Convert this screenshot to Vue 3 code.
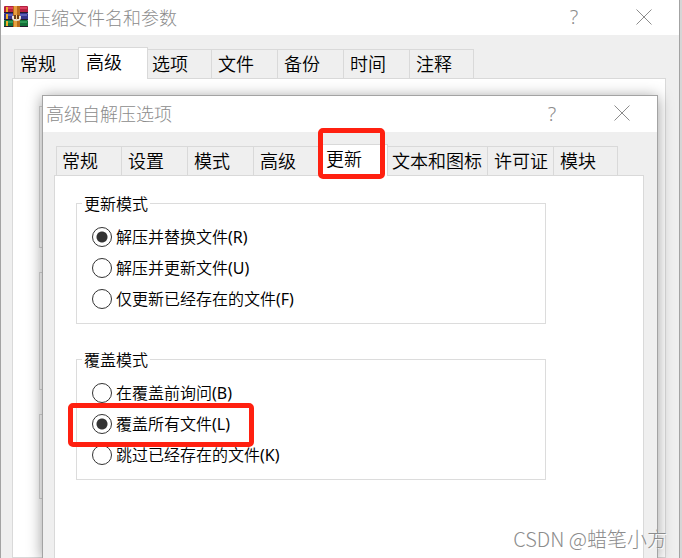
<template>
  <div class="desktop">
    <div class="window outer">
      <header class="titlebar">
        <svg class="logo" viewBox="0 0 24 22" width="24" height="22">
          <rect x="0" y="0" width="24" height="7" rx="1" fill="#b3213f" />
          <rect x="2" y="1" width="21" height="2" fill="#dc4060" />
          <rect x="0" y="7" width="24" height="7" rx="1" fill="#35358c" />
          <rect x="2" y="8" width="21" height="2" fill="#5c60b8" />
          <rect x="0" y="14" width="24" height="7" rx="1" fill="#137039" />
          <rect x="2" y="15" width="21" height="2" fill="#2c9854" />
          <path d="M0 6.5h24M0 13.5h24M0 20.5h24" stroke="#251a2c" />
          <path d="M3 1v5M3 8v5M3 15v5" stroke="#f2ae25" stroke-width="2" />
          <rect x="9" y="0" width="7" height="21" fill="#b86a1b" />
          <path d="M11.5 0v21" stroke="#e8a040" stroke-width="3" />
          <path d="M9 10v2q0 2 3.5 2t3.5-2v-2" fill="none" stroke="#eee6d8" stroke-width="2" />
          <rect x="10" y="9" width="5" height="4" fill="#704018" />
          <path d="M12.5 9v5" stroke="#f5d28a" />
        </svg>
        <h1>压缩文件名和参数</h1>
        <button class="caption" type="button" aria-label="帮助">?</button>
        <button class="caption" type="button" aria-label="关闭">
          <svg viewBox="0 0 16 16" width="16" height="16"><path d="M.5 .5l15 15M15.5 .5l-15 15" /></svg>
        </button>
      </header>
      <nav class="tabs">
        <button
          v-for="tab in outerTabs"
          :key="tab"
          type="button"
          :class="{ active: tab === outerTab }"
          @click="outerTab = tab"
        >
          {{ tab }}
        </button>
      </nav>
      <div class="panel back">
        <div class="frame large"></div>
        <div class="frame medium"></div>
        <div class="frame small"></div>
      </div>
    </div>

    <div class="window inner">
      <header class="titlebar">
        <h2>高级自解压选项</h2>
        <button class="caption" type="button" aria-label="帮助">?</button>
        <button class="caption" type="button" aria-label="关闭">
          <svg viewBox="0 0 16 16" width="16" height="16"><path d="M.5 .5l15 15M15.5 .5l-15 15" /></svg>
        </button>
      </header>
      <nav class="tabs">
        <button
          v-for="tab in innerTabs"
          :key="tab"
          type="button"
          :class="{ active: tab === innerTab, marked: tab === '更新' }"
          @click="innerTab = tab"
        >
          {{ tab }}
        </button>
      </nav>
      <div class="panel options">
        <fieldset v-for="group in groups" :key="group.name">
          <legend>{{ group.title }}</legend>
          <label v-for="item in group.items" :key="item.value" :class="{ marked: item.value === 'L' }">
            <input v-model="selected[group.name]" type="radio" :name="group.name" :value="item.value" />
            <span>{{ item.text }}<span class="hotkey">({{ item.value }})</span></span>
          </label>
        </fieldset>
      </div>
    </div>

    <div class="watermark">CSDN @蜡笔小方</div>
  </div>
</template>

<script setup>
import { ref, reactive } from 'vue'

const outerTabs = ['常规', '高级', '选项', '文件', '备份', '时间', '注释']
const innerTabs = ['常规', '设置', '模式', '高级', '更新', '文本和图标', '许可证', '模块']
const outerTab = ref('高级')
const innerTab = ref('更新')

const selected = reactive({ update: 'R', overwrite: 'L' })

const groups = [
  {
    name: 'update',
    title: '更新模式',
    items: [
      { value: 'R', text: '解压并替换文件' },
      { value: 'U', text: '解压并更新文件' },
      { value: 'F', text: '仅更新已经存在的文件' }
    ]
  },
  {
    name: 'overwrite',
    title: '覆盖模式',
    items: [
      { value: 'B', text: '在覆盖前询问' },
      { value: 'L', text: '覆盖所有文件' },
      { value: 'K', text: '跳过已经存在的文件' }
    ]
  }
]
</script>

<style>
body {
  margin: 0;
}
</style>

<style scoped>
.desktop {
  position: relative;
  display: flex;
  box-sizing: border-box;
  height: 100vh;
  min-height: 500px;
  padding-right: 2px;
  overflow: hidden;
  background: #d6d6d6;
  color: #000;
  font-family: 'Noto Sans', 'Noto Sans CJK SC', sans-serif;
  font-size: 16px;
  font-weight: 350;
}

.window {
  display: flex;
  flex-direction: column;
  box-sizing: border-box;
  background: #efefef;
  border: 1px solid #a3a3a3;
}

.outer {
  flex: 1;
  border-top: 0;
  border-bottom: 0;
}

.inner {
  position: absolute;
  top: 95px;
  right: 24px;
  bottom: 0;
  left: 42px;
  border-bottom: 0;
  box-shadow: 0 2px 14px rgba(0, 0, 0, 0.4);
}

.titlebar {
  display: flex;
  align-items: center;
  flex: none;
  height: 35px;
  padding-left: 3px;
  background: #fff;
  color: #8c8c8c;
}

.inner .titlebar {
  height: 36px;
}

.logo {
  margin: 0 5px 2px 0;
}

h1,
h2 {
  flex: 1;
  margin: 0;
  font-size: 18px;
  font-weight: 300;
  line-height: 34px;
}

button {
  padding: 0;
  border: 0;
  background: none;
  color: inherit;
  font: inherit;
}

.caption {
  display: flex;
  align-items: center;
  justify-content: center;
  width: 70px;
  height: 33px;
  margin-bottom: 2px;
  font-size: 20px;
}

.caption svg {
  fill: none;
  stroke: #8c8c8c;
}

.tabs {
  display: flex;
  flex: none;
  padding: 14px 13px 0;
}

.tabs button {
  position: relative;
  box-sizing: border-box;
  min-width: 66px;
  height: 29px;
  padding: 0 5px 0 6px;
  border: 1px solid #d9d9d9;
  border-width: 1px 1px 0 0;
  font-size: 18px;
  line-height: 28px;
  text-align: left;
  white-space: nowrap;
}

.tabs button:first-child {
  padding-left: 5px;
  border-left-width: 1px;
}

.tabs button:last-child {
  min-width: 64px;
}

.tabs button.active {
  z-index: 1;
  min-width: 70px;
  height: 32px;
  margin: -2px -2px -1px;
  padding: 0 7px 4px;
  border-left-width: 1px;
  background: #fff;
}

.panel {
  flex: 1;
  min-height: 0;
  margin: 0 13px 0 11px;
  border: 1px solid #d9d9d9;
  background: #fff;
}

.back {
  padding: 27px 26px 0;
}

.frame {
  box-sizing: border-box;
  margin-bottom: 24px;
  border: 1px solid #d9d9d9;
}

.large {
  height: 142px;
}

.medium {
  height: 118px;
}

.small {
  height: 85px;
}

.options {
  padding: 15px 97px 0 21px;
  border-bottom: 0;
}

fieldset {
  display: flex;
  flex-direction: column;
  align-items: flex-start;
  min-width: 0;
  margin: 0 0 23px;
  padding: 5px 15px 9px;
  border: 1px solid #dcdcdc;
}

legend {
  height: 25px;
  margin-left: -10px;
  padding: 0 2px;
  line-height: 27px;
}

label {
  position: relative;
  display: flex;
  align-items: center;
  gap: 4px;
  height: 31px;
  line-height: 24px;
  white-space: nowrap;
}

.hotkey {
  font-weight: 400;
}

input {
  appearance: none;
  box-sizing: border-box;
  width: 20px;
  height: 20px;
  margin: 0;
  border: 1px solid #333;
  border-radius: 50%;
  background: #fff;
}

input:checked {
  background: radial-gradient(circle, #333 5px, #fff 6px);
}

/* red highlight boxes */
.marked {
  z-index: 2;
}

.marked::after {
  content: '';
  position: absolute;
  border: 5px solid #ff2010;
  border-radius: 5px;
  pointer-events: none;
}

.tabs .marked::after {
  top: -17px;
  right: 2px;
  bottom: -3px;
  left: -1px;
}

label.marked::after {
  top: -5px;
  right: -24px;
  bottom: -8px;
  left: -24px;
}

.watermark {
  position: absolute;
  right: 15px;
  bottom: 5px;
  z-index: 3;
  color: #8c8c8c;
  font-family: 'Noto Sans CJK SC', sans-serif;
  font-size: 20px;
  font-weight: 300;
  line-height: 28px;
  text-shadow: 1px 1px 0 rgba(255, 255, 255, 0.8);
}
</style>
